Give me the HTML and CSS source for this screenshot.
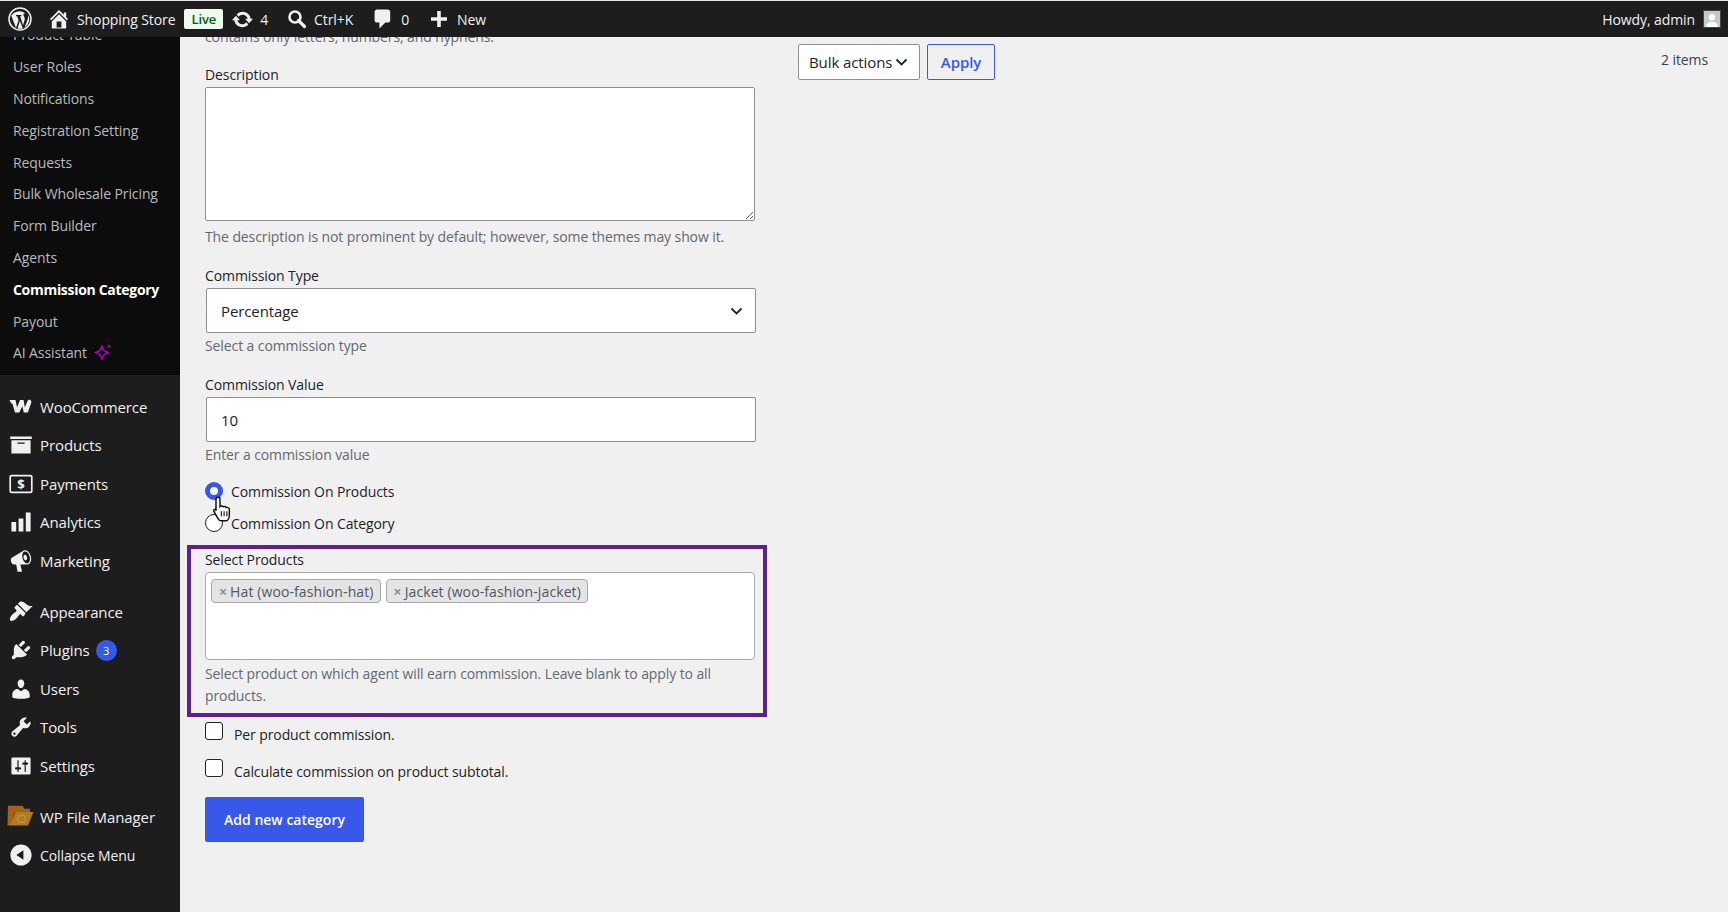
FILE: index.html
```html
<!DOCTYPE html>
<html lang="en">
<head>
<meta charset="utf-8">
<title>Commission Category</title>
<link rel="stylesheet" href="styles.css">
</head>
<body>
<header class="adminbar">
  <svg class="wp-logo" viewBox="0 0 24 24"><circle cx="12" cy="12" r="11" fill="none" stroke="#f0f0f1" stroke-width="1.500"/><path fill="#f0f0f1" d="M3.200 8.600 8 21l2.600-7.800-1.400-3.900-1.200-.1V8.100h5.400v1.100l-1.300.1 3 8.900 1.400-4.900c.5-1.700.2-3-.9-4.600-.6-1.100.3-2.500 1.600-2.400A9.900 9.900 0 0 0 3.200 8.600zM11.900 14 9.600 21.500a9.800 9.800 0 0 0 5.300-.1zM20 7.600c.5 2.200 0 3.800-.7 5.700l-2.700 7.200A9.800 9.800 0 0 0 20 7.600z"/></svg>
  <span class="bar-item bar-home"><svg class="bar-icon bar-icon-lg" viewBox="0 0 20 20"><path d="M16 8.500l1.530 1.530-1.060 1.060L10 4.620l-6.470 6.470-1.060-1.060L10 2.500l4 4v-2h2v4zm-6-2.460l6 5.990V18H4v-5.970zM12 17v-5H8v5h4z"/></svg><span>Shopping Store</span></span>
  <span class="live">Live</span>
  <span class="bar-item bar-update"><svg class="bar-icon bar-icon-md" viewBox="0 0 20 20"><path d="M10.200 3.280c3.530 0 6.430 2.610 6.920 6h2.080l-3.500 4-3.500-4h2.320c-.45-1.970-2.210-3.450-4.320-3.450-1.450 0-2.730.71-3.540 1.780L4.950 5.660C6.230 4.200 8.110 3.280 10.200 3.280zm-.4 13.440c-3.520 0-6.430-2.610-6.920-6H.8l3.500-4c1.170 1.330 2.330 2.670 3.500 4H5.480c.45 1.970 2.210 3.450 4.320 3.450 1.450 0 2.730-.71 3.540-1.780l1.710 1.950c-1.280 1.460-3.150 2.380-5.250 2.380z"/></svg><span>4</span></span>
  <span class="bar-item bar-search"><svg class="bar-icon" viewBox="0 0 20 20"><circle cx="8" cy="8" r="5.500" fill="none" stroke="#f0f0f1" stroke-width="2.600"/><path d="M11.500 11.500 17.500 17.500" stroke="#f0f0f1" stroke-width="3.200" stroke-linecap="round"/></svg><span>Ctrl+K</span></span>
  <span class="bar-item bar-comments"><svg class="bar-icon bar-icon-lg" viewBox="0 0 20 20"><path d="M5 2h9c1.100 0 2 .9 2 2v7c0 1.100-.9 2-2 2h-2l-5 5v-5H5c-1.100 0-2-.9-2-2V4c0-1.100.9-2 2-2z"/></svg><span>0</span></span>
  <span class="bar-item bar-new"><svg class="bar-icon" viewBox="0 0 20 20"><path d="M18 8.200v3.600h-6.200V18H8.200v-6.200H2V8.200h6.200V2h3.600v6.200H18z"/></svg><span>New</span></span>
  <span class="bar-howdy">Howdy, admin</span>
  <svg class="avatar" viewBox="0 0 18 18"><rect width="18" height="18" fill="#c9c9c9"/><circle cx="9" cy="7" r="3.600" fill="#fff"/><path d="M2.500 18c0-4 3-6 6.500-6s6.500 2 6.500 6z" fill="#fff"/></svg>
</header>

<div class="layout">
  <aside class="sidebar">
    <ul class="submenu">
      <li>Product Table</li>
      <li>User Roles</li>
      <li>Notifications</li>
      <li>Registration Setting</li>
      <li>Requests</li>
      <li>Bulk Wholesale Pricing</li>
      <li>Form Builder</li>
      <li>Agents</li>
      <li class="current">Commission Category</li>
      <li>Payout</li>
      <li>AI Assistant <svg class="ai-star" viewBox="0 0 18 18"><path d="M8 2.500c.5 3.500 2 5.300 6 6-4 .7-5.500 2.500-6 6-.5-3.500-2-5.300-6-6 4-.7 5.500-2.500 6-6z" fill="none" stroke="#b000bb" stroke-width="1.400" stroke-linejoin="round"/><path d="M14.500 .8l.6 1.500 1.500.6-1.500.6-.6 1.500-.6-1.500-1.500-.6 1.500-.6z" fill="#b000bb"/></svg></li>
    </ul>
    <ul class="menu">
      <li><svg class="menu-icon menu-icon-woo" viewBox="0 0 24 14"><path d="M.5 1h6l1.600 7.500L11 1h3.600l1.200 7.500L18.500 2c.5-1.100 1.500-1.500 2.600-1.100 1 .4 1.600 1.400 1.200 2.500L18.800 13.500h-4l-1.500-6.300-3 6.300H6L3.600 5C2.700 4.800 1.400 3.500.5 1z"/></svg>WooCommerce</li>
      <li><svg class="menu-icon" viewBox="0 0 20 20"><path d="M19 3v2H1V3h18zM2 6h16v11H2V6zm11 3V8H7v1h6z"/></svg>Products</li>
      <li><svg class="menu-icon" viewBox="0 0 20 20"><rect x="1" y="3" width="18" height="14" rx="1.200" fill="none" stroke="#f0f0f1" stroke-width="1.400"/><text class="dollar" x="10" y="14.500" text-anchor="middle">$</text></svg>Payments</li>
      <li><svg class="menu-icon" viewBox="0 0 20 20"><path d="M18 18V2h-4v16h4zm-6 0V7H8v11h4zm-6 0v-8H2v8h4z"/></svg>Analytics</li>
      <li><svg class="menu-icon" viewBox="0 0 20 20"><path d="M18.150 5.940c.46 1.620.38 3.220-.02 4.480-.42 1.280-1.260 2.180-2.300 2.480-.16.06-.26.06-.4.06-.06.02-.12.02-.18.02-.06.02-.14.02-.22.02H9.500l1.300 5.500c.02.14-.06.26-.14.34-.08.1-.24.16-.34.16H7.500c-.1 0-.26-.06-.34-.16-.08-.08-.16-.2-.14-.34L6 13H4.250c-.5.06-1.080-.18-1.540-.62s-.88-1.080-1.060-1.880c-.24-.8-.2-1.560-.02-2.200.18-.62.58-1.080 1.060-1.300l9-5.400c.1-.06.18-.1.24-.16.06-.04.14-.08.24-.12.16-.08.28-.12.5-.18 1.040-.3 2.240.1 3.220 1 .98.88 1.800 2.240 2.260 3.860zm-2.580 5.980c.4-.1.74-.34 1.040-.7.58-.7.860-1.760.860-3.040 0-.64-.1-1.300-.28-1.980-.34-1.360-1.020-2.500-1.780-3.240s-1.680-1.100-2.460-.88c-.82.220-1.400.96-1.700 2-.32 1.040-.28 2.360.06 3.720.38 1.360 1 2.500 1.800 3.240.78.74 1.620 1.100 2.480.88zm-2.540-7.080c.22-.04.42-.02.62.04.38.16.76.48 1.020 1s.42 1.200.42 1.780c0 .3-.04.56-.12.8-.18.48-.44.84-.86.94-.34.1-.8-.06-1.140-.4s-.64-.86-.78-1.500c-.18-.62-.12-1.240.02-1.720s.48-.84.82-.94z"/></svg>Marketing</li>
      <li class="group"><svg class="menu-icon" viewBox="0 0 20 20"><path d="M14.480 11.060 7.410 3.990l1.500-1.500c.5-.56 2.300-.47 3.510.32 1.210.8 1.430 1.280 2.910 2.100 1.180.64 2.450 1.260 4.450.85zm-.71.71L6.700 4.700 4.930 6.470c-.39.39-.39 1.020 0 1.410l1.060 1.060c.39.39.39 1.030 0 1.420-.6.6-1.430 1.110-2.210 1.690-.35.26-.7.53-1.010.84-1.340 1.340-2.600 4.150-1.700 5.050.9.900 3.700-.35 5.040-1.690.31-.31.58-.66.84-1.010.58-.78 1.090-1.610 1.690-2.210.39-.39 1.030-.39 1.420 0l1.060 1.060c.39.39 1.020.39 1.410 0z"/></svg>Appearance</li>
      <li><svg class="menu-icon" viewBox="0 0 20 20"><path d="M13.110 4.360 9.870 7.600 8 5.730l3.240-3.240c.35-.34 1.050-.2 1.560.32.52.51.66 1.210.31 1.550zm-8 1.770.91-1.120 9.010 9.010-1.190.84c-.71.71-2.630 1.160-3.820 1.160H6.140L4.900 17.260c-.59.59-1.540.59-2.120 0-.59-.58-.59-1.530 0-2.120l1.240-1.240v-3.880c0-1.130.4-3.190 1.090-3.890zm7.260 3.970 3.240-3.240c.34-.35 1.040-.21 1.550.31.52.51.66 1.210.31 1.550l-3.240 3.250z"/></svg>Plugins <span class="badge">3</span></li>
      <li><svg class="menu-icon" viewBox="0 0 20 20"><path d="M10 9.250c-2.270 0-2.730-3.440-2.730-3.440C7 4.020 7.820 2 9.970 2c2.160 0 2.980 2.020 2.710 3.810 0 0-.41 3.440-2.680 3.440zm0 2.570L12.720 10c2.390 0 4.520 2.330 4.520 4.530v2.490s-3.650 1.130-7.240 1.130c-3.650 0-7.240-1.130-7.240-1.130v-2.490c0-2.250 1.940-4.480 4.470-4.480z"/></svg>Users</li>
      <li><svg class="menu-icon" viewBox="0 0 20 20"><path d="M16.680 9.770c-1.340 1.340-3.300 1.670-4.950.99l-5.410 6.520c-.99.99-2.590.99-3.580 0s-.99-2.590 0-3.570l6.520-5.420c-.68-1.650-.35-3.610.99-4.950 1.280-1.280 3.120-1.620 4.720-1.060l-2.890 2.890 2.820 2.820 2.860-2.870c.53 1.580.18 3.390-1.080 4.650zM3.810 16.210c.4.39 1.040.39 1.430 0 .4-.4.4-1.040 0-1.430-.39-.4-1.030-.4-1.430 0-.39.39-.39 1.030 0 1.430z"/></svg>Tools</li>
      <li><svg class="menu-icon" viewBox="0 0 20 20"><path d="M18 16V4c0-.55-.45-1-1-1H3c-.55 0-1 .45-1 1v12c0 .55.45 1 1 1h14c.55 0 1-.45 1-1zM8 11h1c.55 0 1 .45 1 1s-.45 1-1 1H8v1.500c0 .28-.22.5-.5.5s-.5-.22-.5-.5V13H6c-.55 0-1-.45-1-1s.45-1 1-1h1V5.500c0-.28.22-.5.5-.5s.5.22.5.5V11zm5-2h-1c-.55 0-1-.45-1-1s.45-1 1-1h1V5.500c0-.28.22-.5.5-.5s.5.22.5.5V7h1c.55 0 1 .45 1 1s-.45 1-1 1h-1v5.500c0 .28-.22.5-.5.5s-.5-.22-.5-.5V9z"/></svg>Settings</li>
      <li class="group"><svg class="menu-icon menu-icon-folder" viewBox="0 0 27 21"><path d="M1 .8h14.500l2 3H23V7H8L3 20.500H.5z" fill="#a5621c"/><path d="M8.500 7H26.500L21 20.500H2.500z" fill="#b07a1f"/><circle cx="14.500" cy="13.700" r="4" fill="none" stroke="#c99a4b" stroke-width="1"/></svg>WP File Manager</li>
      <li class="collapse"><svg class="menu-icon" viewBox="0 0 20 20"><path d="M10 1.160c4.880 0 8.840 3.960 8.840 8.840s-3.960 8.840-8.840 8.840S1.160 14.880 1.160 10 5.160 1.160 10 1.160zm2 12.720V6.120L6.180 9.970z"/></svg>Collapse Menu</li>
    </ul>
  </aside>

  <main class="content">
    <form class="form-col">
      <p class="help help-clipped">contains only letters, numbers, and hyphens.</p>

      <label class="field-label label-desc">Description</label>
      <textarea class="textarea"></textarea>
      <p class="help help-desc">The description is not prominent by default; however, some themes may show it.</p>

      <label class="field-label label-next">Commission Type</label>
      <div class="select-wrap">
        <select class="control">
          <option>Percentage</option>
        </select>
        <svg class="chevron" viewBox="0 0 12 8"><path d="M1 1.500 6 6.500 11 1.500" fill="none" stroke="#1d2327" stroke-width="1.800"/></svg>
      </div>
      <p class="help">Select a commission type</p>

      <label class="field-label label-next">Commission Value</label>
      <input class="control control-input" type="text" value="10">
      <p class="help">Enter a commission value</p>

      <div class="radios">
        <label class="radio-row"><input class="radio" type="radio" name="on" checked><span>Commission On Products</span></label>
        <label class="radio-row radio-row-tight"><input class="radio" type="radio" name="on"><span>Commission On Category</span></label>
        <svg class="cursor" viewBox="0 0 18 23"><path d="M4.500 1c1.100 0 1.800.8 1.800 1.800v6.500c.5-.7 2.300-.7 2.900.2.600-.5 2.300-.3 2.700.7.800-.4 2.800-.1 2.800 1.500v4.800c0 2.500-1 5.500-2.700 5.500H7c-1.200 0-1.900-.7-2.500-1.800L.8 13.600c-.7-1.300 1-2.600 2.100-1.400l-.2.200V2.800C2.700 1.800 3.400 1 4.500 1z" fill="#fff" stroke="#111" stroke-width="1.300"/><path d="M7.500 13.500v4.500M10 13.500v4.500M12.500 13.500v4.500" stroke="#111" stroke-width="1"/></svg>
      </div>

      <section class="highlight">
        <label class="field-label">Select Products</label>
        <div class="multi">
          <span class="tag"><span class="tag-x">×</span>Hat (woo-fashion-hat)</span>
          <span class="tag"><span class="tag-x">×</span>Jacket (woo-fashion-jacket)</span>
        </div>
        <p class="help help-multi">Select product on which agent will earn commission. Leave blank to apply to all products.</p>
      </section>

      <label class="check-row"><input class="check" type="checkbox"><span>Per product commission.</span></label>
      <label class="check-row check-row-next"><input class="check" type="checkbox"><span>Calculate commission on product subtotal.</span></label>

      <button class="primary" type="button">Add new category</button>
    </form>

    <section class="list-col">
      <div class="tablenav">
        <div class="bulk">
          <select class="bulk-select"><option>Bulk actions</option></select>
          <svg class="bulk-chevron" viewBox="0 0 12 8"><path d="M1 1.500 6 6.500 11 1.500" fill="none" stroke="#1d2327" stroke-width="1.800"/></svg>
        </div>
        <button class="apply" type="button">Apply</button>
        <span class="items">2 items</span>
      </div>
    </section>
  </main>
</div>
</body>
</html>
```
FILE: styles.css
```css
* { box-sizing: border-box; }

html, body {
  margin: 0;
  height: 912px;
  overflow: hidden;
}

body {
  background: #f0f0f1;
  color: #1d2327;
  font-family: "Open Sans", "Noto Sans", "Liberation Sans", sans-serif;
  font-size: 14px;
  letter-spacing: -0.1px;
}

/* Admin bar */
.adminbar {
  display: flex;
  align-items: center;
  height: 37px;
  border-top: 1px solid #e8e8e8;
  background: #1d1d1d;
  color: #f0f0f1;
  padding-left: 8px;
  padding-right: 7px;
}

.wp-logo { width: 24px; height: 24px; flex: none; }

.bar-item { display: inline-flex; align-items: center; }
.bar-icon { width: 20px; height: 20px; fill: #f0f0f1; flex: none; }
.bar-icon-lg { width: 24px; height: 24px; }
.bar-icon-md { width: 23px; height: 23px; }
.bar-home { margin-left: 15px; gap: 6px; }
.bar-update { margin-left: 8px; gap: 6px; }
.bar-search { margin-left: 19px; gap: 7px; }
.bar-comments { margin-left: 18px; gap: 6px; }
.bar-new { margin-left: 20px; gap: 8px; }

.live {
  margin-left: 9px;
  padding: 0 7px;
  height: 20px;
  line-height: 20px;
  border-radius: 2px;
  background: #edfaef;
  color: #005c12;
  font-size: 13px;
  font-weight: 600;
}

.bar-howdy { margin-left: auto; }
.avatar { width: 18px; height: 18px; margin-left: 8px; border: 1px solid #444; }

/* Layout */
.layout {
  display: flex;
  height: 875px;
  overflow: hidden;
}

.sidebar {
  flex: none;
  width: 180px;
  background: #1d1d1d;
  color: #f0f0f1;
}

.submenu, .menu { list-style: none; margin: 0; padding: 0; }

.submenu {
  height: 338px;
  overflow: hidden;
  background: #0c0c0c;
  color: #b9babd;
}

.submenu li {
  display: flex;
  align-items: center;
  gap: 6px;
  height: 31.8px;
  padding-left: 13px;
}

.submenu li:first-child { margin-top: -18px; }

.submenu .current { color: #fff; font-weight: 700; letter-spacing: -0.3px; }

.ai-star { width: 20px; height: 20px; }

.menu { padding-top: 12.4px; font-size: 15px; }

.menu li {
  display: flex;
  align-items: center;
  height: 38.6px;
  padding-left: 40px;
  position: relative;
}

.menu li.group { margin-top: 12px; }
.menu li.collapse { font-size: 14px; }

.menu-icon {
  position: absolute;
  left: 9px;
  top: 7px;
  width: 24px;
  height: 24px;
  fill: #f0f0f1;
}

.menu-icon-woo { left: 9px; top: 12px; width: 24px; height: 14px; }
.menu-icon-folder { left: 7px; top: 8px; width: 27px; height: 21px; }

.dollar { font-size: 11px; font-weight: 700; fill: #f0f0f1; }

.badge {
  display: inline-block;
  margin-left: 6px;
  width: 21px;
  height: 21px;
  line-height: 21px;
  border-radius: 50%;
  background: #3858e9;
  color: #fff;
  font-size: 11px;
  text-align: center;
}

/* Content */
.content {
  flex: 1;
  display: flex;
  padding-left: 25px;
  min-width: 0;
}

.form-col {
  flex: none;
  width: 551px;
}

.help {
  margin: 3px 0 0;
  line-height: 20px;
  color: #646970;
}

.help-clipped { margin-top: -10px; }
.help-desc { margin-top: 6px; }

.field-label {
  display: block;
  line-height: 20px;
  margin-bottom: 2px;
  color: #1d2327;
}

.label-desc { margin-top: 18px; }
.label-next { margin-top: 19px; }

.textarea {
  display: block;
  width: 550px;
  height: 134px;
  border: 1px solid #8c8f94;
  border-radius: 2px;
  background: #fff;
}

.select-wrap { position: relative; }

.control {
  display: block;
  width: 550px;
  margin-left: 1px;
  height: 45px;
  padding: 0 14px;
  border: 1px solid #8c8f94;
  border-radius: 2px;
  background: #fff;
  color: #1d2327;
  font: inherit;
  font-size: 15px;
  letter-spacing: inherit;
  appearance: none;
}

.chevron {
  position: absolute;
  left: 525px;
  top: 19px;
  width: 13px;
  height: 8px;
}

.radios { position: relative; margin-top: 16px; }

.radio-row {
  display: flex;
  align-items: center;
  gap: 8px;
  height: 20px;
}

.radio-row-tight { margin-top: 12px; }

.radio {
  appearance: none;
  margin: 0;
  width: 18px;
  height: 18px;
  border: 1.5px solid #1d2327;
  border-radius: 50%;
  background: #fff;
  flex: none;
}

.radio:checked { border: 5px solid #3858e9; }

.cursor {
  position: absolute;
  left: 8px;
  top: 15px;
  width: 20px;
  height: 26px;
}

.highlight {
  width: 580px;
  margin: 12px 0 0 -18px;
  height: 172px;
  border: 4px solid #5f2187;
  padding: 1px 8px 0 14px;
}

.multi {
  display: flex;
  align-items: flex-start;
  gap: 5px;
  height: 88px;
  padding: 6px 5px;
  background: #fff;
  border: 1px solid #a7aaad;
  border-radius: 4px;
}

.tag {
  display: inline-flex;
  align-items: center;
  height: 24px;
  padding: 0 6px;
  background: #e4e4e4;
  border: 1px solid #a7aaad;
  border-radius: 4px;
  color: #50575e;
  letter-spacing: 0.1px;
}

.tag-x {
  margin: 0 3px 0 1px;
  color: #8c8f94;
  font-weight: 700;
}

.help-multi { line-height: 22px; }

.check-row {
  display: flex;
  align-items: center;
  gap: 11px;
  height: 18px;
  margin-top: 5px;
}

.check-row span { padding-top: 6px; }

.check-row-next { margin-top: 19px; }

.check {
  appearance: none;
  margin: 0;
  width: 18px;
  height: 18px;
  background: #fff;
  border: 1.5px solid #1d2327;
  border-radius: 3px;
  flex: none;
}

.primary {
  display: block;
  margin-top: 20px;
  width: 159px;
  height: 45px;
  border: 0;
  border-radius: 2px;
  background: #3858e9;
  color: #fff;
  font: 600 14px "Open Sans", "Noto Sans", sans-serif;
  letter-spacing: 0;
}

.list-col {
  flex: 1;
  min-width: 0;
  padding: 7px 20px 0 42px;
}

.tablenav { display: flex; align-items: center; gap: 7px; }

.bulk { position: relative; }

.bulk-select {
  display: block;
  appearance: none;
  width: 122px;
  height: 36px;
  padding: 0 10px;
  border: 1px solid #8c8f94;
  border-radius: 2px;
  background: #fff;
  color: #1d2327;
  font: inherit;
  font-size: 15px;
  letter-spacing: inherit;
}

.bulk-chevron {
  position: absolute;
  left: 97px;
  top: 14px;
  width: 13px;
  height: 8px;
}

.apply {
  width: 68px;
  height: 36px;
  border: 1px solid #3858e9;
  border-radius: 2px;
  background: #f0f0f1;
  color: #3858e9;
  font: 600 15px "Open Sans", "Noto Sans", sans-serif;
  letter-spacing: -0.1px;
}

.items {
  margin-left: auto;
  margin-bottom: 5px;
  color: #3c434a;
}
```
